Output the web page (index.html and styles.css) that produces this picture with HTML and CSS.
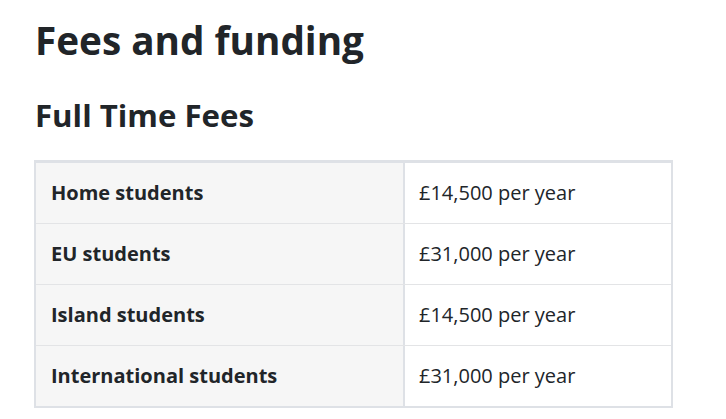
FILE: index.html
```html
<!DOCTYPE html>
<html lang="en">
<head>
<meta charset="utf-8">
<title>Fees and funding</title>
<link rel="stylesheet" href="styles.css">
</head>
<body>
<main class="page">
  <h1 class="title">Fees and funding</h1>
  <h2 class="subtitle">Full Time Fees</h2>
  <div class="fees">
    <div class="fees-row">
      <div class="fees-label">Home students</div>
      <div class="fees-value">£14,500 per year</div>
    </div>
    <div class="fees-row">
      <div class="fees-label">EU students</div>
      <div class="fees-value">£31,000 per year</div>
    </div>
    <div class="fees-row">
      <div class="fees-label">Island students</div>
      <div class="fees-value">£14,500 per year</div>
    </div>
    <div class="fees-row">
      <div class="fees-label">International students</div>
      <div class="fees-value">£31,000 per year</div>
    </div>
  </div>
</main>
</body>
</html>
```
FILE: styles.css
```css
* { box-sizing: border-box; }
html, body { margin: 0; padding: 0; background: #ffffff; }
body {
  font-family: "Open Sans", "Liberation Sans", sans-serif;
  color: #212529;
}
.page {
  padding: 16px 34px 0 34px;
  width: 707px;
}
.title {
  margin: 0 0 0 1px;
  font-size: 38.7px;
  line-height: 48px;
  font-weight: 700;
}
.subtitle {
  margin: 32px 0 0 1px;
  font-size: 31.2px;
  line-height: 38px;
  font-weight: 700;
}
.fees {
  margin-top: 26px;
  border-top: 3px solid #dee1e6;
  border-left: 2px solid #dee1e6;
  border-right: 2px solid #dee1e6;
  border-bottom: 2px solid #dee1e6;
  width: 639px;
}
.fees-row {
  display: grid;
  grid-template-columns: 369px 1fr;
  border-bottom: 1px solid #e3e4e6;
}
.fees-row:last-child { border-bottom: none; }
.fees-label, .fees-value {
  padding: 16px 15px;
  font-size: 20px;
  line-height: 28px;
}
.fees-label {
  background: #f6f6f6;
  font-weight: 700;
  border-right: 2px solid #dee1e6;
}
.fees-value {
  font-weight: 400;
  padding-left: 14px;
}
```
